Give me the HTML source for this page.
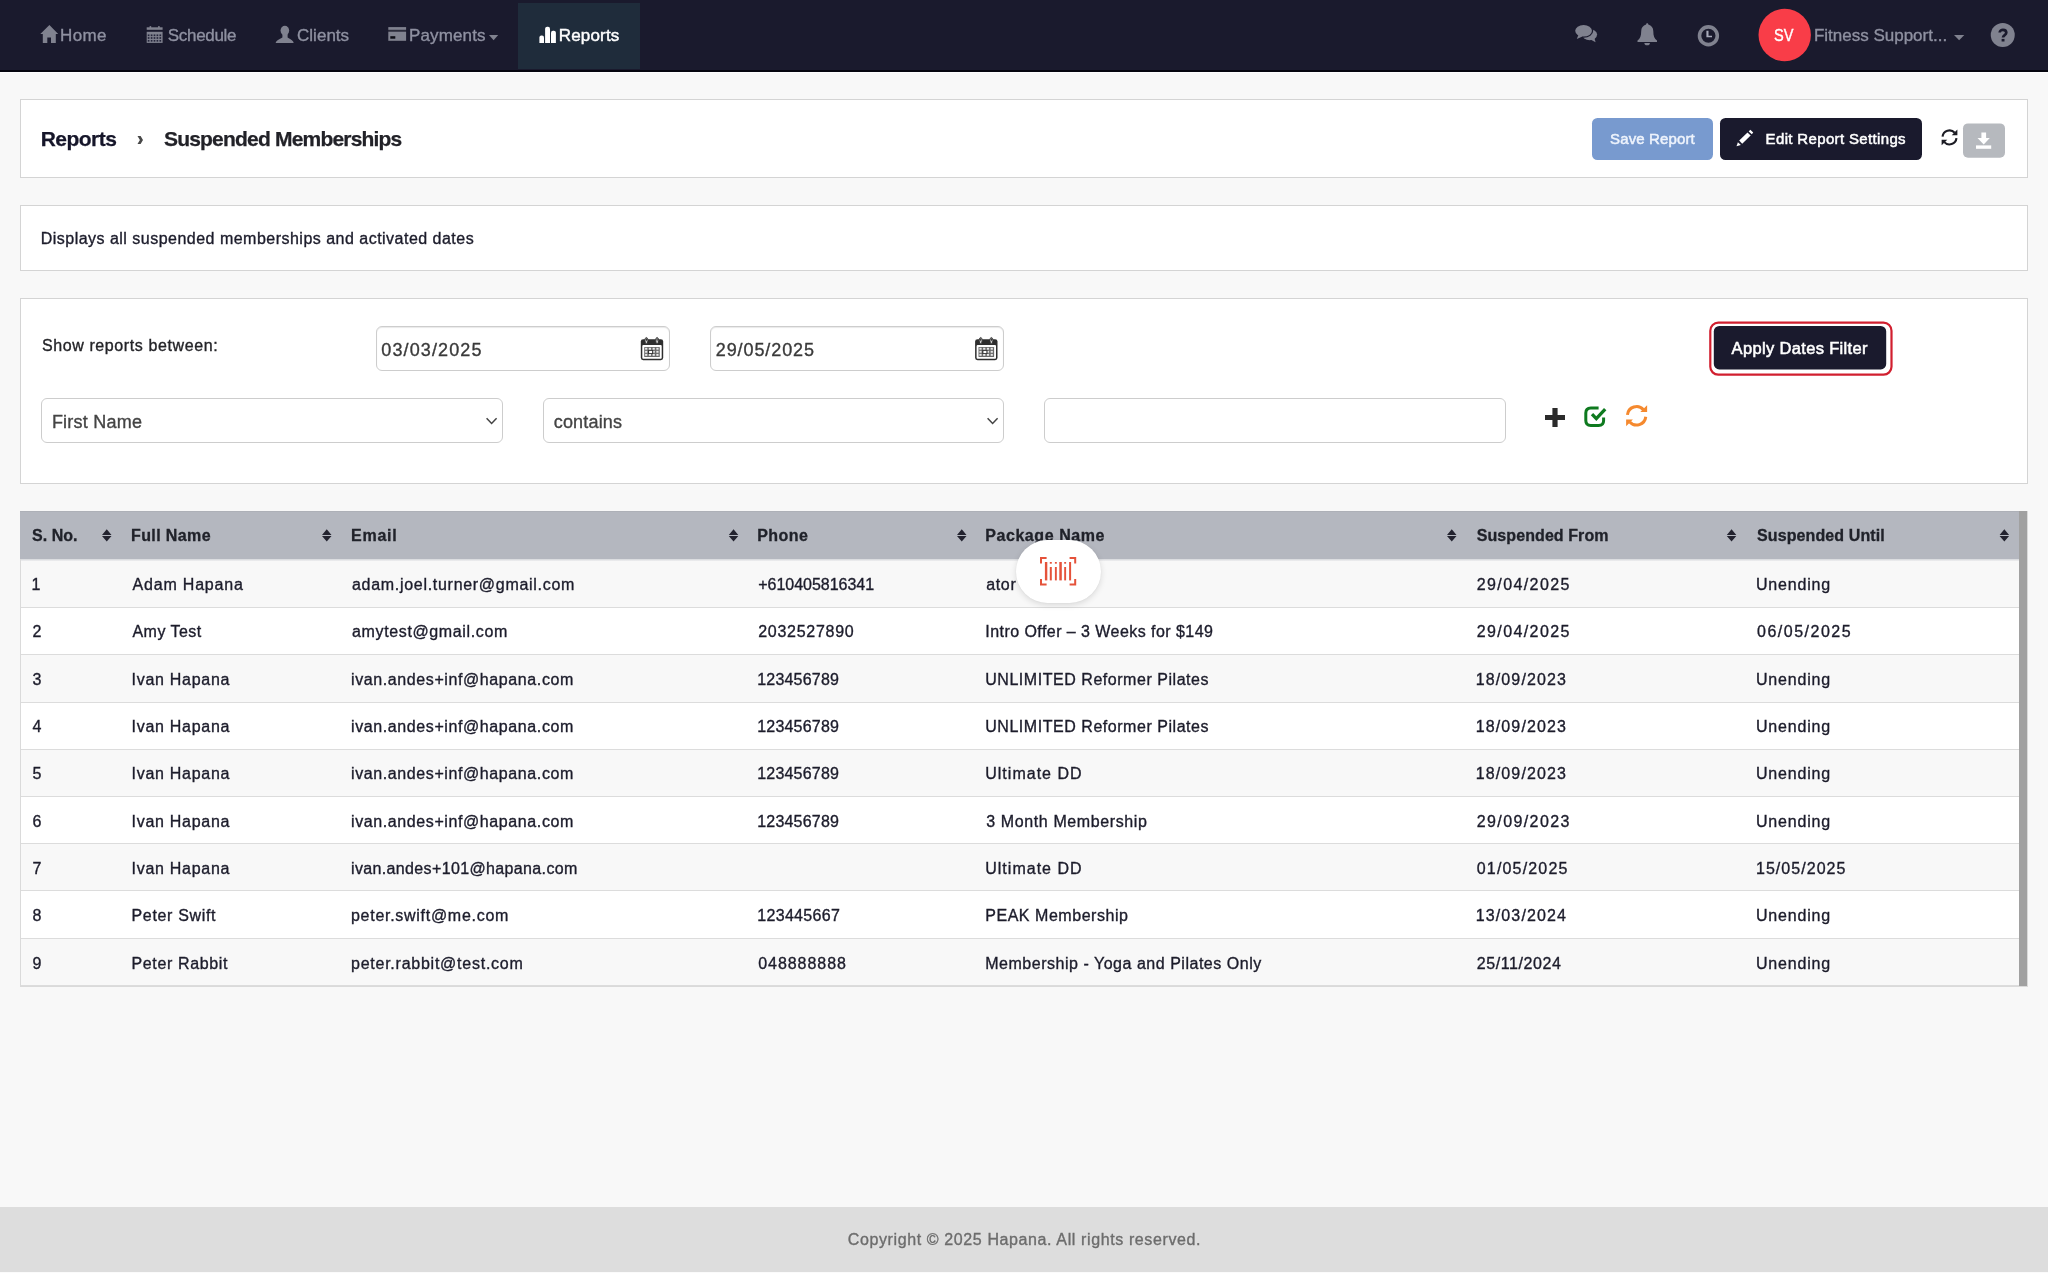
<!DOCTYPE html>
<html lang="en">
<head>
<meta charset="utf-8">
<title>Suspended Memberships</title>
<style>
*{box-sizing:border-box;margin:0;padding:0}
html,body{width:2048px;height:1273px;overflow:hidden}
body{background:#f8f8f8;font-family:"Liberation Sans",sans-serif;color:#1c1c2b;font-size:17px;position:relative}
.t{position:absolute;white-space:nowrap;line-height:1}
svg{position:absolute;overflow:visible}
.a{position:absolute}
#nav{position:absolute;left:0;top:0;width:2048px;height:72px;background:#1a1a2d;border-bottom:2px solid #06060f}
#navhl{position:absolute;left:0;top:72px;width:2048px;height:1px;background:#fdfdfd}
#navact{position:absolute;left:518px;top:3px;width:121.5px;height:65.5px;background:#1f2c3b}
.card{position:absolute;left:20px;width:2008px;background:#fff;border:1px solid #d4d4d4}
.inp{position:absolute;background:#fff;border:1px solid #cdcdcd;border-radius:6px}
#tbl{position:absolute;left:20px;top:511px;width:2008px;height:476px;background:#fff;border:1px solid #dadada}
#thead{position:absolute;left:20px;top:511px;width:1999px;height:48px;background:#b4b7bf;border-top:1px solid #adb0b7}
#theadsh{position:absolute;left:21px;top:559px;width:1998px;height:2px;background:linear-gradient(#d4d6da,#f0f0f1)}
.row{position:absolute;left:21px;width:1998px;border-bottom:1px solid #dcdcdc}
.odd{background:#f8f8f8}
.even{background:#fff}
#sbar{position:absolute;left:2019px;top:511px;width:8px;height:475px;background:#a1a1a1}
#foot{position:absolute;left:0;top:1207px;width:2048px;height:65px;background:#dddddd}
#footline{position:absolute;left:0;top:1272px;width:2048px;height:1px;background:#fbfbfb}
</style>
</head>
<body>
<div id="nav"><div id="navact"></div></div><div id="navhl"></div>
<svg style="left:0;top:0" width="2048" height="1273" viewBox="0 0 2048 1273" ><path d="M49.4,25.1 L58.2,33.9 L55.8,33.9 L55.8,42.9 L51,42.9 L51,37.4 L47.3,37.4 L47.3,42.9 L42.8,42.9 L42.8,33.9 L40.3,33.9 Z" fill="#80828f"/><rect x="146.7" y="27.3" width="15.9" height="2.5" fill="#80828f"/><rect x="149.6" y="26.1" width="1.6" height="2" fill="#80828f"/><rect x="158.1" y="26.1" width="1.6" height="2" fill="#80828f"/><rect x="146.7" y="31.8" width="15.9" height="11.1" fill="#80828f"/><rect x="147.75" y="34.45" width="1.7" height="1.7" fill="#23243a"/><rect x="147.75" y="37.15" width="1.7" height="1.7" fill="#23243a"/><rect x="147.75" y="39.95" width="1.7" height="1.7" fill="#23243a"/><rect x="150.75" y="34.45" width="1.7" height="1.7" fill="#23243a"/><rect x="150.75" y="37.15" width="1.7" height="1.7" fill="#23243a"/><rect x="150.75" y="39.95" width="1.7" height="1.7" fill="#23243a"/><rect x="153.65" y="34.45" width="1.7" height="1.7" fill="#23243a"/><rect x="153.65" y="37.15" width="1.7" height="1.7" fill="#23243a"/><rect x="153.65" y="39.95" width="1.7" height="1.7" fill="#23243a"/><rect x="156.55" y="34.45" width="1.7" height="1.7" fill="#23243a"/><rect x="156.55" y="37.15" width="1.7" height="1.7" fill="#23243a"/><rect x="156.55" y="39.95" width="1.7" height="1.7" fill="#23243a"/><rect x="159.45" y="34.45" width="1.7" height="1.7" fill="#23243a"/><rect x="159.45" y="37.15" width="1.7" height="1.7" fill="#23243a"/><rect x="159.45" y="39.95" width="1.7" height="1.7" fill="#23243a"/><ellipse cx="284.85" cy="30.6" rx="4.3" ry="4.9" fill="#80828f"/><path d="M275.6,43 Q276.2,40.4 282.4,37.6 L282.4,34 L287.6,34 L287.6,37.6 Q293.2,40.4 293.7,43 Z" fill="#80828f"/><rect x="388.3" y="27.1" width="17.8" height="2.8" fill="#80828f"/><rect x="388.3" y="29.9" width="17.8" height="1.8" fill="#2b2c3a"/><rect x="388.3" y="31.7" width="17.8" height="9.1" fill="#80828f"/><rect x="390.3" y="36.2" width="5" height="2.5" fill="#0c0c14"/><path d="M489,35 L498.2,35 L493.6,40.2 Z" fill="#80828f"/><path d="M539.4,43.1 L539.4,37.4 Q539.4,35.4 541.4,35.4 L542.0,35.4 Q544.0,35.4 544.0,37.4 L544.0,43.1 Z" fill="#ffffff"/><path d="M545.1,43.1 L545.1,28.7 Q545.1,26.7 547.1,26.7 L548.0,26.7 Q550.0,26.7 550.0,28.7 L550.0,43.1 Z" fill="#ffffff"/><path d="M551.0,43.1 L551.0,32.8 Q551.0,30.8 553.0,30.8 L553.9,30.8 Q555.9,30.8 555.9,32.8 L555.9,43.1 Z" fill="#ffffff"/><ellipse cx="1589.6" cy="34.6" rx="7.5" ry="5.6" fill="#80828f"/><path d="M1590.5,39.5 L1595.6,42.2 L1594.3,37.8 Z" fill="#80828f"/><ellipse cx="1583.6" cy="30.8" rx="9.6" ry="7.0" fill="#1a1a2d"/><path d="M1577.6,34 L1575.6,40.2 L1583,37.2 Z" fill="#1a1a2d"/><ellipse cx="1583.6" cy="30.8" rx="8.4" ry="5.8" fill="#80828f"/><path d="M1578.6,34.5 L1576.8,39 L1582.5,36.5 Z" fill="#80828f"/><path d="M1647.2,23.2 C1648,23.2 1648.4,23.9 1648.3,24.6 C1651.5,25.5 1653.3,28 1653.3,31.2 C1653.3,36 1654.4,38.6 1657,40.6 L1657,42 L1637.5,42 L1637.5,40.6 C1640.1,38.6 1641.2,36 1641.2,31.2 C1641.2,28 1643,25.5 1646.1,24.6 C1646,23.9 1646.4,23.2 1647.2,23.2 Z" fill="#80828f"/><path d="M1644.4,42.9 a2.75,2.4 0 0 0 5.5,0 Z" fill="#80828f"/><circle cx="1708.4" cy="35.75" r="8.9" fill="none" stroke="#80828f" stroke-width="3.6"/><path d="M1706.4,30.7 h2.1 v5.1 h3.5 v1.5 h-5.6 Z" fill="#a9abbb"/><circle cx="1784.7" cy="35" r="26.2" fill="#f93d48"/><path d="M1954,35 L1964.3,35 L1959.15,40.3 Z" fill="#80828f"/><circle cx="2002.75" cy="35" r="12" fill="#80828f"/><path d="M1999.7,32.6 C1999.7,28.9 2006.3,28.9 2006.3,32.7 C2006.3,35.2 2003,35 2003,37.6" fill="none" stroke="#1a1a2d" stroke-width="2.7"/><rect x="2001.6" y="38.9" width="2.9" height="2.6" fill="#1a1a2d"/></svg>
<div class="card" style="top:99px;height:79px"></div>
<div class="card" style="top:205px;height:66px"></div>
<div class="card" style="top:298px;height:186px"></div>
<div class="inp" style="left:376px;top:326px;width:294px;height:45px;box-shadow:inset 0 1px 1px rgba(0,0,0,.09)"></div><div class="inp" style="left:710px;top:326px;width:294px;height:45px;box-shadow:inset 0 1px 1px rgba(0,0,0,.09)"></div><div class="inp" style="left:41px;top:398px;width:462px;height:45px"></div><div class="inp" style="left:543px;top:398px;width:461px;height:45px"></div><div class="inp" style="left:1044px;top:398px;width:462px;height:45px"></div><svg style="left:0;top:0" width="2048" height="1273" viewBox="0 0 2048 1273" ><path d="M137.5,135.9 L140.6,135.9 L143,140 L140.6,144.1 L137.5,144.1 L139.9,140 Z" fill="#484848"/><rect x="1592" y="118" width="121" height="42" rx="5.5" fill="#789acf"/><rect x="1720" y="118" width="202" height="42" rx="5.5" fill="#1a1a2d"/><path d="M1736.5,146.3 L1737.9,142.2 L1740.9,144.9 Z" fill="#fff"/><path d="M1739.2,140.6 L1747.5,132.6 L1750.7,135.4 L1742.2,143.8 Z" fill="#fff"/><path d="M1748.7,131.4 L1750.3,129.8 L1753.2,132.4 L1751.8,134.2 Z" fill="#fff"/><path d="M1942.54,136.67 A7.0,7.0 0 0 1 1954.70,132.72" fill="none" stroke="#1c1c24" stroke-width="2.1" stroke-linecap="butt"/><path d="M1956.46,138.13 A7.0,7.0 0 0 1 1944.30,142.08" fill="none" stroke="#1c1c24" stroke-width="2.1" stroke-linecap="butt"/><path d="M1957.35,129.55 L1957.35,135.15 L1951.75,135.15 Z" fill="#1c1c24"/><path d="M1941.65,145.25 L1941.65,139.65 L1947.25,139.65 Z" fill="#1c1c24"/><rect x="1963" y="123.4" width="42" height="34.4" rx="5" fill="#b6b9be"/><path d="M1981.4,132.6 H1986.1 V137.9 H1989.8 L1983.7,144.4 L1977.5,137.9 H1981.4 Z" fill="#fff"/><rect x="1976" y="145.4" width="15.2" height="3.4" fill="#fff"/><rect x="1710.3" y="322.7" width="181.2" height="52" rx="8" fill="#fff" stroke="#d11f2f" stroke-width="2.2"/><rect x="1713.8" y="326" width="172.4" height="43.4" rx="5.5" fill="#1a1a2d"/><rect x="1545" y="415" width="20" height="5" fill="#2b2b2b"/><rect x="1552.4" y="408" width="5.2" height="19" fill="#2b2b2b"/><path d="M1598.6,408 H1590.8 Q1585.8,408 1585.8,413 V420.5 Q1585.8,425.5 1590.8,425.5 H1598.6 Q1603.6,425.5 1603.6,420.5 V417.4" fill="none" stroke="#0e7a1f" stroke-width="3"/><path d="M1592,414.2 L1596.3,418.6 L1605.2,409.2" fill="none" stroke="#0e7a1f" stroke-width="3.3"/><path d="M1627.45,414.84 A9.2,9.2 0 0 1 1643.44,409.64" fill="none" stroke="#f5892e" stroke-width="3.0" stroke-linecap="butt"/><path d="M1645.75,416.76 A9.2,9.2 0 0 1 1629.76,421.96" fill="none" stroke="#f5892e" stroke-width="3.0" stroke-linecap="butt"/><path d="M1647.10,405.30 L1647.10,412.10 L1640.30,412.10 Z" fill="#f5892e"/><path d="M1626.10,426.30 L1626.10,419.50 L1632.90,419.50 Z" fill="#f5892e"/><path d="M486.6,418.2 L491.6,423.4 L496.6,418.2" fill="none" stroke="#444" stroke-width="1.5"/><path d="M987.6,418.2 L992.6,423.4 L997.6,418.2" fill="none" stroke="#444" stroke-width="1.5"/><rect x="640.8" y="339.2" width="22.4" height="21" rx="2.4" fill="#2e2e2e"/><rect x="642.3" y="345.0" width="19.4" height="13.8" rx="1" fill="#fff"/><rect x="644.1999999999999" y="347.0" width="15.6" height="10" rx="0.6" fill="#6a6a6a"/><rect x="645.10" y="347.80" width="2.2" height="1.9" fill="#e9e9e9"/><rect x="645.10" y="350.85" width="2.2" height="1.9" fill="#e9e9e9"/><rect x="645.10" y="353.90" width="2.2" height="1.9" fill="#e9e9e9"/><rect x="648.85" y="347.80" width="2.2" height="1.9" fill="#e9e9e9"/><rect x="648.85" y="350.85" width="2.2" height="1.9" fill="#e9e9e9"/><rect x="648.85" y="353.90" width="2.2" height="1.9" fill="#e9e9e9"/><rect x="652.60" y="347.80" width="2.2" height="1.9" fill="#e9e9e9"/><rect x="652.60" y="350.85" width="2.2" height="1.9" fill="#e9e9e9"/><rect x="652.60" y="353.90" width="2.2" height="1.9" fill="#e9e9e9"/><rect x="656.35" y="347.80" width="2.2" height="1.9" fill="#e9e9e9"/><rect x="656.35" y="350.85" width="2.2" height="1.9" fill="#e9e9e9"/><rect x="656.35" y="353.90" width="2.2" height="1.9" fill="#e9e9e9"/><rect x="648.00" y="350.00" width="5.2" height="4" fill="#333"/><rect x="649.10" y="350.90" width="3" height="2.2" fill="#fff"/><ellipse cx="646.4" cy="340.59999999999997" rx="1.5" ry="3.1" fill="#c9c9c9" stroke="#2e2e2e" stroke-width="0.9"/><ellipse cx="646.4" cy="339.4" rx="0.55" ry="1.5" fill="#2e2e2e"/><ellipse cx="657.0999999999999" cy="340.59999999999997" rx="1.5" ry="3.1" fill="#c9c9c9" stroke="#2e2e2e" stroke-width="0.9"/><ellipse cx="657.0999999999999" cy="339.4" rx="0.55" ry="1.5" fill="#2e2e2e"/><rect x="975.1" y="339.2" width="22.4" height="21" rx="2.4" fill="#2e2e2e"/><rect x="976.6" y="345.0" width="19.4" height="13.8" rx="1" fill="#fff"/><rect x="978.5" y="347.0" width="15.6" height="10" rx="0.6" fill="#6a6a6a"/><rect x="979.40" y="347.80" width="2.2" height="1.9" fill="#e9e9e9"/><rect x="979.40" y="350.85" width="2.2" height="1.9" fill="#e9e9e9"/><rect x="979.40" y="353.90" width="2.2" height="1.9" fill="#e9e9e9"/><rect x="983.15" y="347.80" width="2.2" height="1.9" fill="#e9e9e9"/><rect x="983.15" y="350.85" width="2.2" height="1.9" fill="#e9e9e9"/><rect x="983.15" y="353.90" width="2.2" height="1.9" fill="#e9e9e9"/><rect x="986.90" y="347.80" width="2.2" height="1.9" fill="#e9e9e9"/><rect x="986.90" y="350.85" width="2.2" height="1.9" fill="#e9e9e9"/><rect x="986.90" y="353.90" width="2.2" height="1.9" fill="#e9e9e9"/><rect x="990.65" y="347.80" width="2.2" height="1.9" fill="#e9e9e9"/><rect x="990.65" y="350.85" width="2.2" height="1.9" fill="#e9e9e9"/><rect x="990.65" y="353.90" width="2.2" height="1.9" fill="#e9e9e9"/><rect x="982.30" y="350.00" width="5.2" height="4" fill="#333"/><rect x="983.40" y="350.90" width="3" height="2.2" fill="#fff"/><ellipse cx="980.7" cy="340.59999999999997" rx="1.5" ry="3.1" fill="#c9c9c9" stroke="#2e2e2e" stroke-width="0.9"/><ellipse cx="980.7" cy="339.4" rx="0.55" ry="1.5" fill="#2e2e2e"/><ellipse cx="991.4" cy="340.59999999999997" rx="1.5" ry="3.1" fill="#c9c9c9" stroke="#2e2e2e" stroke-width="0.9"/><ellipse cx="991.4" cy="339.4" rx="0.55" ry="1.5" fill="#2e2e2e"/></svg>
<div id="tbl"></div>
<div class="row odd" style="top:559px;height:49px"></div>
<div class="row even" style="top:608px;height:47px"></div>
<div class="row odd" style="top:655px;height:48px"></div>
<div class="row even" style="top:703px;height:47px"></div>
<div class="row odd" style="top:750px;height:47px"></div>
<div class="row even" style="top:797px;height:47px"></div>
<div class="row odd" style="top:844px;height:47px"></div>
<div class="row even" style="top:891px;height:48px"></div>
<div class="row odd" style="top:939px;height:47px"></div>
<div id="thead"></div>
<div id="theadsh"></div>
<div id="sbar"></div>
<svg style="left:0;top:0" width="2048" height="1273" viewBox="0 0 2048 1273" ><path d="M102,535.0 L106.75,529.3 L111.5,535.0 Z M102,536.0 L111.5,536.0 L106.75,541.6 Z" fill="#23232f"/><path d="M322,535.0 L326.75,529.3 L331.5,535.0 Z M322,536.0 L331.5,536.0 L326.75,541.6 Z" fill="#23232f"/><path d="M728.8,535.0 L733.55,529.3 L738.3,535.0 Z M728.8,536.0 L738.3,536.0 L733.55,541.6 Z" fill="#23232f"/><path d="M957,535.0 L961.75,529.3 L966.5,535.0 Z M957,536.0 L966.5,536.0 L961.75,541.6 Z" fill="#23232f"/><path d="M1447,535.0 L1451.75,529.3 L1456.5,535.0 Z M1447,536.0 L1456.5,536.0 L1451.75,541.6 Z" fill="#23232f"/><path d="M1726.8,535.0 L1731.55,529.3 L1736.3,535.0 Z M1726.8,536.0 L1736.3,536.0 L1731.55,541.6 Z" fill="#23232f"/><path d="M1999.6,535.0 L2004.35,529.3 L2009.1,535.0 Z M1999.6,536.0 L2009.1,536.0 L2004.35,541.6 Z" fill="#23232f"/></svg>
<div id="foot"></div><div id="footline"></div>
<div id="txt" style="position:absolute;left:0;top:0;width:2048px;height:1273px;will-change:transform"><div class="t" style="left:60.00px;top:27.00px;font-size:17px;color:#8f91a1;letter-spacing:0.369px;-webkit-text-stroke:0.35px #8f91a1;">Home</div>
<div class="t" style="left:167.80px;top:27.00px;font-size:17px;color:#8f91a1;letter-spacing:-0.319px;-webkit-text-stroke:0.35px #8f91a1;">Schedule</div>
<div class="t" style="left:297.00px;top:27.00px;font-size:17px;color:#8f91a1;letter-spacing:0.023px;-webkit-text-stroke:0.35px #8f91a1;">Clients</div>
<div class="t" style="left:409.00px;top:27.00px;font-size:17px;color:#8f91a1;letter-spacing:0.130px;-webkit-text-stroke:0.35px #8f91a1;">Payments</div>
<div class="t" style="left:558.80px;top:27.00px;font-size:17px;color:#ffffff;letter-spacing:0.163px;-webkit-text-stroke:0.45px #ffffff;">Reports</div>
<div class="t" style="left:1813.90px;top:27.00px;font-size:17px;color:#8f91a1;-webkit-text-stroke:0.35px #8f91a1;">Fitness Support...</div>
<div class="t" style="left:1774.40px;top:27.00px;font-size:17px;color:#ffffff;transform:scaleX(0.8569);transform-origin:0.00px 0;-webkit-text-stroke:0.4px #ffffff;">SV</div>
<div class="t" style="left:40.70px;top:128.00px;font-size:21px;color:#16162a;font-weight:bold;letter-spacing:-0.528px;-webkit-text-stroke:0.25px #16162a;">Reports</div>
<div class="t" style="left:164.00px;top:128.00px;font-size:21px;color:#222228;font-weight:bold;letter-spacing:-0.805px;-webkit-text-stroke:0.25px #222228;">Suspended Memberships</div>
<div class="t" style="left:1610.00px;top:131.00px;font-size:15px;color:#eef3fc;letter-spacing:0.139px;-webkit-text-stroke:0.5px #eef3fc;">Save Report</div>
<div class="t" style="left:1765.60px;top:131.00px;font-size:15px;color:#ffffff;letter-spacing:0.347px;-webkit-text-stroke:0.5px #ffffff;">Edit Report Settings</div>
<div class="t" style="left:40.70px;top:231.00px;font-size:16px;color:#1c1c2b;letter-spacing:0.484px;-webkit-text-stroke:0.35px #1c1c2b;">Displays all suspended memberships and activated dates</div>
<div class="t" style="left:41.90px;top:338.00px;font-size:16px;color:#242428;letter-spacing:0.605px;-webkit-text-stroke:0.35px #242428;">Show reports between:</div>
<div class="t" style="left:381.30px;top:341.00px;font-size:18px;color:#3a3a3a;letter-spacing:1.125px;-webkit-text-stroke:0.35px #3a3a3a;">03/03/2025</div>
<div class="t" style="left:715.75px;top:341.00px;font-size:18px;color:#3a3a3a;letter-spacing:0.908px;-webkit-text-stroke:0.35px #3a3a3a;">29/05/2025</div>
<div class="t" style="left:51.90px;top:413.00px;font-size:18px;color:#444444;letter-spacing:0.234px;-webkit-text-stroke:0.35px #444444;">First Name</div>
<div class="t" style="left:553.75px;top:413.00px;font-size:18px;color:#444444;letter-spacing:0.172px;-webkit-text-stroke:0.35px #444444;">contains</div>
<div class="t" style="left:1731.60px;top:340.00px;font-size:16.5px;color:#ffffff;letter-spacing:0.334px;-webkit-text-stroke:0.55px #ffffff;">Apply Dates Filter</div>
<div class="t" style="left:32.00px;top:528.00px;font-size:16px;color:#20222a;font-weight:bold;letter-spacing:0.022px;-webkit-text-stroke:0.3px #20222a;">S. No.</div>
<div class="t" style="left:131.00px;top:528.00px;font-size:16px;color:#20222a;font-weight:bold;letter-spacing:0.398px;-webkit-text-stroke:0.3px #20222a;">Full Name</div>
<div class="t" style="left:351.00px;top:528.00px;font-size:16px;color:#20222a;font-weight:bold;letter-spacing:0.752px;-webkit-text-stroke:0.3px #20222a;">Email</div>
<div class="t" style="left:757.25px;top:528.00px;font-size:16px;color:#20222a;font-weight:bold;letter-spacing:0.439px;-webkit-text-stroke:0.3px #20222a;">Phone</div>
<div class="t" style="left:985.25px;top:528.00px;font-size:16px;color:#20222a;font-weight:bold;letter-spacing:0.562px;-webkit-text-stroke:0.3px #20222a;">Package Name</div>
<div class="t" style="left:1476.75px;top:528.00px;font-size:16px;color:#20222a;font-weight:bold;letter-spacing:0.081px;-webkit-text-stroke:0.3px #20222a;">Suspended From</div>
<div class="t" style="left:1757.00px;top:528.00px;font-size:16px;color:#20222a;font-weight:bold;letter-spacing:0.105px;-webkit-text-stroke:0.3px #20222a;">Suspended Until</div>
<div class="t" style="left:31.50px;top:577.00px;font-size:16px;color:#1c1c2b;-webkit-text-stroke:0.35px #1c1c2b;">1</div>
<div class="t" style="left:132.50px;top:577.00px;font-size:16px;color:#1c1c2b;letter-spacing:0.811px;-webkit-text-stroke:0.35px #1c1c2b;">Adam Hapana</div>
<div class="t" style="left:352.00px;top:577.00px;font-size:16px;color:#1c1c2b;letter-spacing:0.703px;-webkit-text-stroke:0.35px #1c1c2b;">adam.joel.turner@gmail.com</div>
<div class="t" style="left:758.25px;top:577.00px;font-size:16px;color:#1c1c2b;letter-spacing:-0.019px;-webkit-text-stroke:0.35px #1c1c2b;">+610405816341</div>
<div class="t" style="left:986.25px;top:577.00px;font-size:16px;color:#1c1c2b;letter-spacing:0.636px;-webkit-text-stroke:0.35px #1c1c2b;">ator</div>
<div class="t" style="left:1476.75px;top:577.00px;font-size:16px;color:#1c1c2b;letter-spacing:1.397px;-webkit-text-stroke:0.35px #1c1c2b;">29/04/2025</div>
<div class="t" style="left:1756.00px;top:577.00px;font-size:16px;color:#1c1c2b;letter-spacing:0.807px;-webkit-text-stroke:0.35px #1c1c2b;">Unending</div>
<div class="t" style="left:32.50px;top:624.00px;font-size:16px;color:#1c1c2b;-webkit-text-stroke:0.35px #1c1c2b;">2</div>
<div class="t" style="left:132.50px;top:624.00px;font-size:16px;color:#1c1c2b;letter-spacing:0.451px;-webkit-text-stroke:0.35px #1c1c2b;">Amy Test</div>
<div class="t" style="left:352.00px;top:624.00px;font-size:16px;color:#1c1c2b;letter-spacing:0.635px;-webkit-text-stroke:0.35px #1c1c2b;">amytest@gmail.com</div>
<div class="t" style="left:758.25px;top:624.00px;font-size:16px;color:#1c1c2b;letter-spacing:0.713px;-webkit-text-stroke:0.35px #1c1c2b;">2032527890</div>
<div class="t" style="left:985.25px;top:624.00px;font-size:16px;color:#1c1c2b;letter-spacing:0.449px;-webkit-text-stroke:0.35px #1c1c2b;">Intro Offer – 3 Weeks for $149</div>
<div class="t" style="left:1476.75px;top:624.00px;font-size:16px;color:#1c1c2b;letter-spacing:1.397px;-webkit-text-stroke:0.35px #1c1c2b;">29/04/2025</div>
<div class="t" style="left:1757.00px;top:624.00px;font-size:16px;color:#1c1c2b;letter-spacing:1.508px;-webkit-text-stroke:0.35px #1c1c2b;">06/05/2025</div>
<div class="t" style="left:32.50px;top:672.00px;font-size:16px;color:#1c1c2b;-webkit-text-stroke:0.35px #1c1c2b;">3</div>
<div class="t" style="left:131.50px;top:672.00px;font-size:16px;color:#1c1c2b;letter-spacing:0.716px;-webkit-text-stroke:0.35px #1c1c2b;">Ivan Hapana</div>
<div class="t" style="left:351.00px;top:672.00px;font-size:16px;color:#1c1c2b;letter-spacing:0.600px;-webkit-text-stroke:0.35px #1c1c2b;">ivan.andes+inf@hapana.com</div>
<div class="t" style="left:757.25px;top:672.00px;font-size:16px;color:#1c1c2b;letter-spacing:0.195px;-webkit-text-stroke:0.35px #1c1c2b;">123456789</div>
<div class="t" style="left:985.25px;top:672.00px;font-size:16px;color:#1c1c2b;letter-spacing:0.537px;-webkit-text-stroke:0.35px #1c1c2b;">UNLIMITED Reformer Pilates</div>
<div class="t" style="left:1475.75px;top:672.00px;font-size:16px;color:#1c1c2b;letter-spacing:1.119px;-webkit-text-stroke:0.35px #1c1c2b;">18/09/2023</div>
<div class="t" style="left:1756.00px;top:672.00px;font-size:16px;color:#1c1c2b;letter-spacing:0.807px;-webkit-text-stroke:0.35px #1c1c2b;">Unending</div>
<div class="t" style="left:32.50px;top:719.00px;font-size:16px;color:#1c1c2b;-webkit-text-stroke:0.35px #1c1c2b;">4</div>
<div class="t" style="left:131.50px;top:719.00px;font-size:16px;color:#1c1c2b;letter-spacing:0.716px;-webkit-text-stroke:0.35px #1c1c2b;">Ivan Hapana</div>
<div class="t" style="left:351.00px;top:719.00px;font-size:16px;color:#1c1c2b;letter-spacing:0.600px;-webkit-text-stroke:0.35px #1c1c2b;">ivan.andes+inf@hapana.com</div>
<div class="t" style="left:757.25px;top:719.00px;font-size:16px;color:#1c1c2b;letter-spacing:0.195px;-webkit-text-stroke:0.35px #1c1c2b;">123456789</div>
<div class="t" style="left:985.25px;top:719.00px;font-size:16px;color:#1c1c2b;letter-spacing:0.537px;-webkit-text-stroke:0.35px #1c1c2b;">UNLIMITED Reformer Pilates</div>
<div class="t" style="left:1475.75px;top:719.00px;font-size:16px;color:#1c1c2b;letter-spacing:1.119px;-webkit-text-stroke:0.35px #1c1c2b;">18/09/2023</div>
<div class="t" style="left:1756.00px;top:719.00px;font-size:16px;color:#1c1c2b;letter-spacing:0.807px;-webkit-text-stroke:0.35px #1c1c2b;">Unending</div>
<div class="t" style="left:32.50px;top:766.00px;font-size:16px;color:#1c1c2b;-webkit-text-stroke:0.35px #1c1c2b;">5</div>
<div class="t" style="left:131.50px;top:766.00px;font-size:16px;color:#1c1c2b;letter-spacing:0.716px;-webkit-text-stroke:0.35px #1c1c2b;">Ivan Hapana</div>
<div class="t" style="left:351.00px;top:766.00px;font-size:16px;color:#1c1c2b;letter-spacing:0.600px;-webkit-text-stroke:0.35px #1c1c2b;">ivan.andes+inf@hapana.com</div>
<div class="t" style="left:757.25px;top:766.00px;font-size:16px;color:#1c1c2b;letter-spacing:0.195px;-webkit-text-stroke:0.35px #1c1c2b;">123456789</div>
<div class="t" style="left:985.25px;top:766.00px;font-size:16px;color:#1c1c2b;letter-spacing:1.007px;-webkit-text-stroke:0.35px #1c1c2b;">Ultimate DD</div>
<div class="t" style="left:1475.75px;top:766.00px;font-size:16px;color:#1c1c2b;letter-spacing:1.119px;-webkit-text-stroke:0.35px #1c1c2b;">18/09/2023</div>
<div class="t" style="left:1756.00px;top:766.00px;font-size:16px;color:#1c1c2b;letter-spacing:0.807px;-webkit-text-stroke:0.35px #1c1c2b;">Unending</div>
<div class="t" style="left:32.50px;top:814.00px;font-size:16px;color:#1c1c2b;-webkit-text-stroke:0.35px #1c1c2b;">6</div>
<div class="t" style="left:131.50px;top:814.00px;font-size:16px;color:#1c1c2b;letter-spacing:0.716px;-webkit-text-stroke:0.35px #1c1c2b;">Ivan Hapana</div>
<div class="t" style="left:351.00px;top:814.00px;font-size:16px;color:#1c1c2b;letter-spacing:0.600px;-webkit-text-stroke:0.35px #1c1c2b;">ivan.andes+inf@hapana.com</div>
<div class="t" style="left:757.25px;top:814.00px;font-size:16px;color:#1c1c2b;letter-spacing:0.195px;-webkit-text-stroke:0.35px #1c1c2b;">123456789</div>
<div class="t" style="left:986.25px;top:814.00px;font-size:16px;color:#1c1c2b;letter-spacing:0.609px;-webkit-text-stroke:0.35px #1c1c2b;">3 Month Membership</div>
<div class="t" style="left:1476.75px;top:814.00px;font-size:16px;color:#1c1c2b;letter-spacing:1.397px;-webkit-text-stroke:0.35px #1c1c2b;">29/09/2023</div>
<div class="t" style="left:1756.00px;top:814.00px;font-size:16px;color:#1c1c2b;letter-spacing:0.807px;-webkit-text-stroke:0.35px #1c1c2b;">Unending</div>
<div class="t" style="left:32.50px;top:861.00px;font-size:16px;color:#1c1c2b;-webkit-text-stroke:0.35px #1c1c2b;">7</div>
<div class="t" style="left:131.50px;top:861.00px;font-size:16px;color:#1c1c2b;letter-spacing:0.716px;-webkit-text-stroke:0.35px #1c1c2b;">Ivan Hapana</div>
<div class="t" style="left:351.00px;top:861.00px;font-size:16px;color:#1c1c2b;letter-spacing:0.358px;-webkit-text-stroke:0.35px #1c1c2b;">ivan.andes+101@hapana.com</div>
<div class="t" style="left:985.25px;top:861.00px;font-size:16px;color:#1c1c2b;letter-spacing:1.007px;-webkit-text-stroke:0.35px #1c1c2b;">Ultimate DD</div>
<div class="t" style="left:1476.75px;top:861.00px;font-size:16px;color:#1c1c2b;letter-spacing:1.174px;-webkit-text-stroke:0.35px #1c1c2b;">01/05/2025</div>
<div class="t" style="left:1756.00px;top:861.00px;font-size:16px;color:#1c1c2b;letter-spacing:1.036px;-webkit-text-stroke:0.35px #1c1c2b;">15/05/2025</div>
<div class="t" style="left:32.50px;top:908.00px;font-size:16px;color:#1c1c2b;-webkit-text-stroke:0.35px #1c1c2b;">8</div>
<div class="t" style="left:131.50px;top:908.00px;font-size:16px;color:#1c1c2b;letter-spacing:0.659px;-webkit-text-stroke:0.35px #1c1c2b;">Peter Swift</div>
<div class="t" style="left:351.00px;top:908.00px;font-size:16px;color:#1c1c2b;letter-spacing:0.715px;-webkit-text-stroke:0.35px #1c1c2b;">peter.swift@me.com</div>
<div class="t" style="left:757.25px;top:908.00px;font-size:16px;color:#1c1c2b;letter-spacing:0.320px;-webkit-text-stroke:0.35px #1c1c2b;">123445667</div>
<div class="t" style="left:985.25px;top:908.00px;font-size:16px;color:#1c1c2b;letter-spacing:0.535px;-webkit-text-stroke:0.35px #1c1c2b;">PEAK Membership</div>
<div class="t" style="left:1475.75px;top:908.00px;font-size:16px;color:#1c1c2b;letter-spacing:1.119px;-webkit-text-stroke:0.35px #1c1c2b;">13/03/2024</div>
<div class="t" style="left:1756.00px;top:908.00px;font-size:16px;color:#1c1c2b;letter-spacing:0.807px;-webkit-text-stroke:0.35px #1c1c2b;">Unending</div>
<div class="t" style="left:32.50px;top:956.00px;font-size:16px;color:#1c1c2b;-webkit-text-stroke:0.35px #1c1c2b;">9</div>
<div class="t" style="left:131.50px;top:956.00px;font-size:16px;color:#1c1c2b;letter-spacing:0.637px;-webkit-text-stroke:0.35px #1c1c2b;">Peter Rabbit</div>
<div class="t" style="left:351.00px;top:956.00px;font-size:16px;color:#1c1c2b;letter-spacing:0.754px;-webkit-text-stroke:0.35px #1c1c2b;">peter.rabbit@test.com</div>
<div class="t" style="left:758.25px;top:956.00px;font-size:16px;color:#1c1c2b;letter-spacing:0.945px;-webkit-text-stroke:0.35px #1c1c2b;">048888888</div>
<div class="t" style="left:985.25px;top:956.00px;font-size:16px;color:#1c1c2b;letter-spacing:0.520px;-webkit-text-stroke:0.35px #1c1c2b;">Membership - Yoga and Pilates Only</div>
<div class="t" style="left:1476.75px;top:956.00px;font-size:16px;color:#1c1c2b;letter-spacing:0.584px;-webkit-text-stroke:0.35px #1c1c2b;">25/11/2024</div>
<div class="t" style="left:1756.00px;top:956.00px;font-size:16px;color:#1c1c2b;letter-spacing:0.807px;-webkit-text-stroke:0.35px #1c1c2b;">Unending</div>
<div class="t" style="left:847.80px;top:1232.00px;font-size:16px;color:#6c6c6c;letter-spacing:0.612px;-webkit-text-stroke:0.35px #6c6c6c;">Copyright © 2025 Hapana. All rights reserved.</div></div>
<div class="a" style="left:1015.5px;top:540px;width:85px;height:63px;border-radius:32px;background:#fff;box-shadow:0 2px 6px rgba(0,0,0,.13),0 0 2px rgba(0,0,0,.06)"></div><svg style="left:0;top:0" width="2048" height="1273" viewBox="0 0 2048 1273" ><path d="M1046.6,558.0 H1041.0 V563.6 M1069.6000000000001,558.0 H1075.2 V563.6 M1046.6,584.5 H1041.0 V578.9 M1069.6000000000001,584.5 H1075.2 V578.9" fill="none" stroke="#e5523a" stroke-width="2"/><rect x="1044.9" y="562" width="2.40" height="18.40" fill="#e5523a"/><rect x="1049.8" y="567" width="2.00" height="13.40" fill="#e5523a"/><rect x="1049.8" y="562" width="2.00" height="1.70" fill="#e5523a"/><rect x="1054.9" y="567" width="1.90" height="13.40" fill="#e5523a"/><rect x="1054.9" y="562" width="1.90" height="1.70" fill="#e5523a"/><rect x="1059.3" y="562" width="2.50" height="18.40" fill="#e5523a"/><rect x="1064.2" y="567" width="1.90" height="13.40" fill="#e5523a"/><rect x="1064.2" y="562" width="1.90" height="1.70" fill="#e5523a"/><rect x="1069.1" y="562" width="2.00" height="18.40" fill="#e5523a"/></svg>
</body>
</html>
